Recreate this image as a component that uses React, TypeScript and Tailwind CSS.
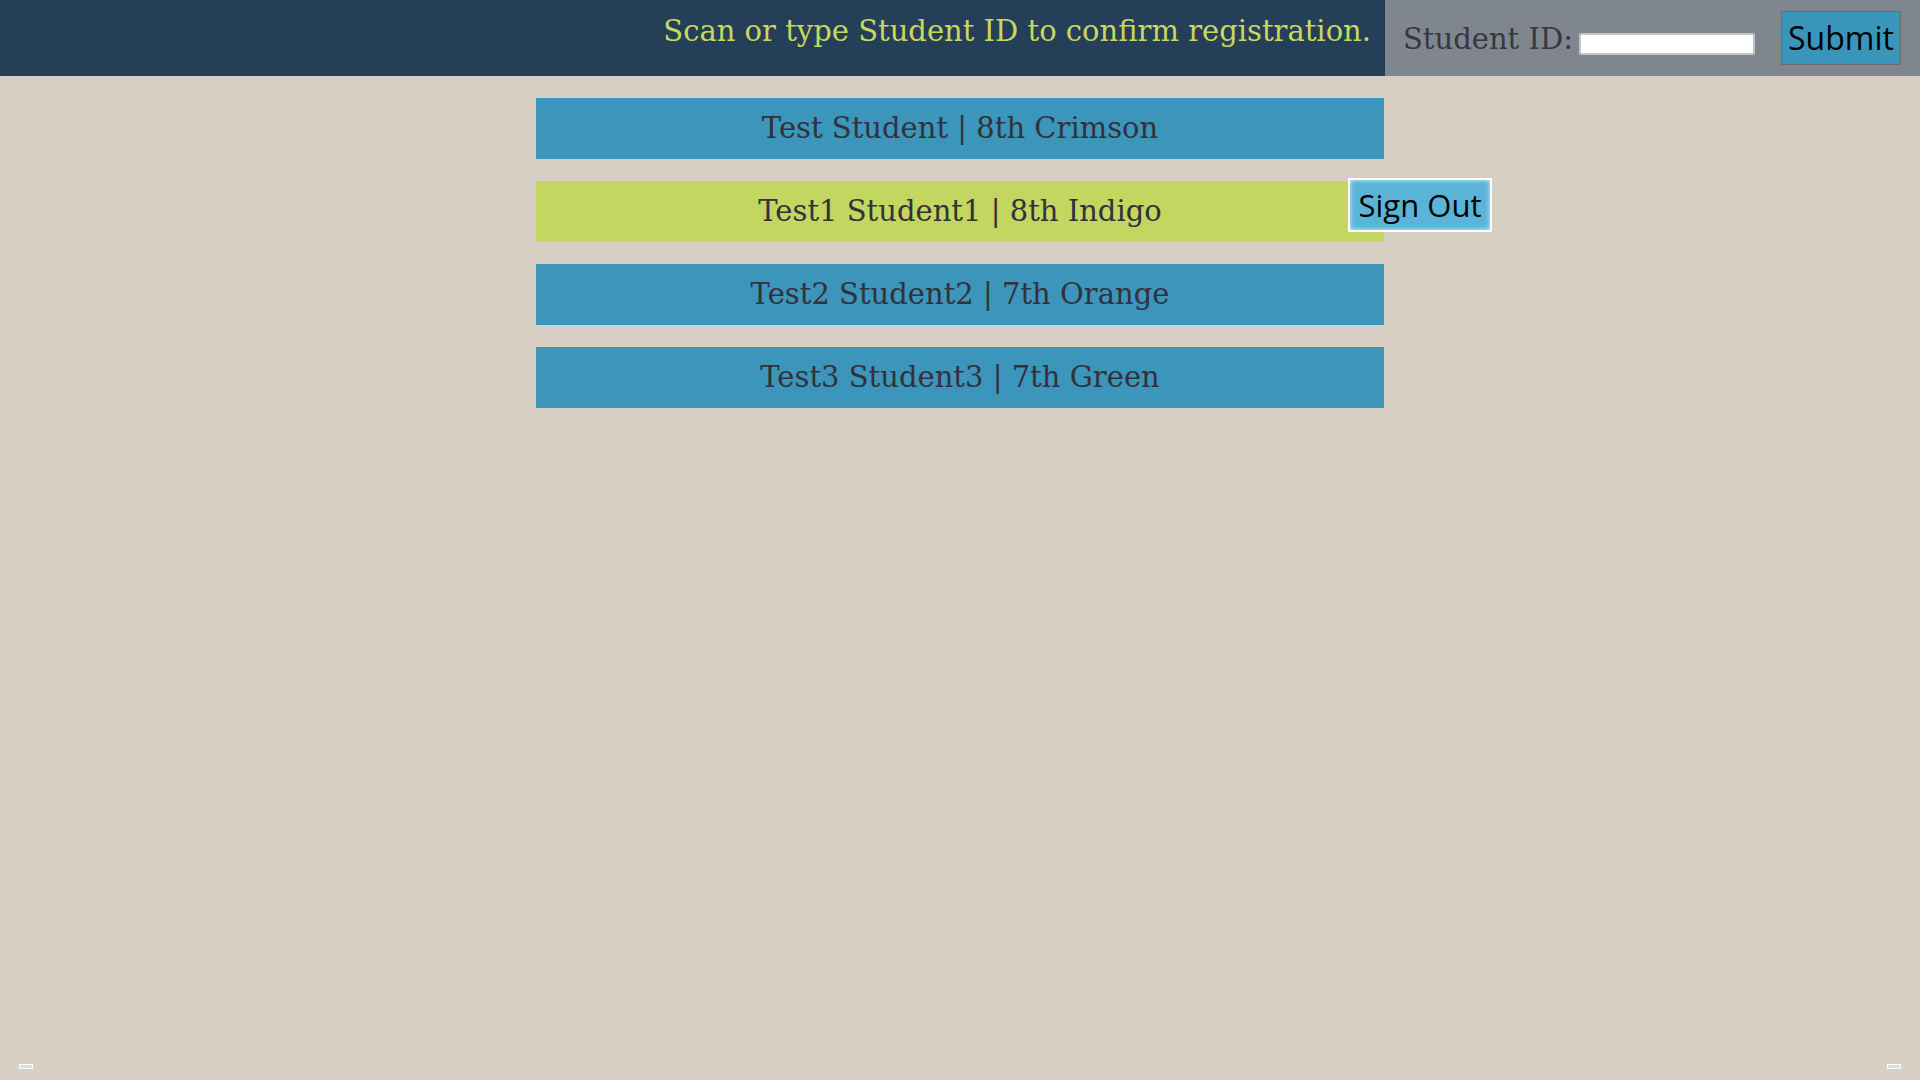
import React, { useState } from "react";

type Student = {
  id: number;
  first: string;
  last: string;
  grade: string;
  team: string;
};

const students: Student[] = [
  { id: 1, first: "Test", last: "Student", grade: "8th", team: "Crimson" },
  { id: 2, first: "Test1", last: "Student1", grade: "8th", team: "Indigo" },
  { id: 3, first: "Test2", last: "Student2", grade: "7th", team: "Orange" },
  { id: 4, first: "Test3", last: "Student3", grade: "7th", team: "Green" },
];

const slab = "font-['DejaVu_Serif',serif]";
const sans = "font-['Open_Sans',sans-serif]";

const App: React.FC = () => {
  const [studentId, setStudentId] = useState<string>("");
  const [selected, setSelected] = useState<number>(2);

  return (
    <div className="min-h-screen bg-[#d7cfc4] relative">
      <header className="flex h-[76px]">
        <div className="flex-1 bg-[#253f58] flex justify-end pr-[14px] pt-[14px]">
          <h1 className={`${slab} text-[29px] leading-[34px] text-[#c8d85e]`}>
            Scan or type Student ID to confirm registration.
          </h1>
        </div>
        <div className="w-[535px] bg-[#7f868e] flex items-start pl-[18px] pr-[19px]">
          <label className={`${slab} text-[29px] leading-[34px] text-[#38373f] mt-[22px]`}>
            Student ID:
          </label>
          <input
            value={studentId}
            onChange={(e) => setStudentId(e.target.value)}
            className="ml-[6px] mt-[33px] w-[176px] h-[22px] bg-white border-2 border-[#c4c4c4] rounded-[2px] outline-none"
          />
          <button
            className={`${sans} ml-auto mt-[11px] w-[120px] h-[54px] bg-[#3a95ba] border border-[#6e6e6e] text-black text-[32px] leading-none`}>
            Submit
          </button>
        </div>
      </header>

      <div className="w-[848px] mx-auto mt-[22px] flex flex-col gap-[22px]">
        {students.map((s) => (
          <div
            key={s.id}
            onClick={() => setSelected(s.id)}
            className={`relative h-[61px] flex items-center justify-center ${
              selected === s.id ? "bg-[#c2d660]" : "bg-[#3c95ba]"
            }`}>
            <span className={`${slab} text-[29px] text-[#33313a]`}>
              {s.first} {s.last} | {s.grade} {s.team}
            </span>
            {selected === s.id && (
              <button
                className={`${sans} absolute right-[-108px] top-[-3px] w-[144px] h-[54px] bg-[#5ab4d8] border-2 border-white shadow-[inset_0_0_5px_rgba(255,255,255,0.8)] text-black text-[31px] leading-none`}>
                Sign Out
              </button>
            )}
          </div>
        ))}
      </div>

      <div className="fixed left-[19px] bottom-[11px] w-[14px] h-[5px] bg-[#cce3ea] border border-white" />
      <div className="fixed right-[19px] bottom-[11px] w-[14px] h-[5px] bg-[#cce3ea] border border-white" />
    </div>
  );
};

export default App;
